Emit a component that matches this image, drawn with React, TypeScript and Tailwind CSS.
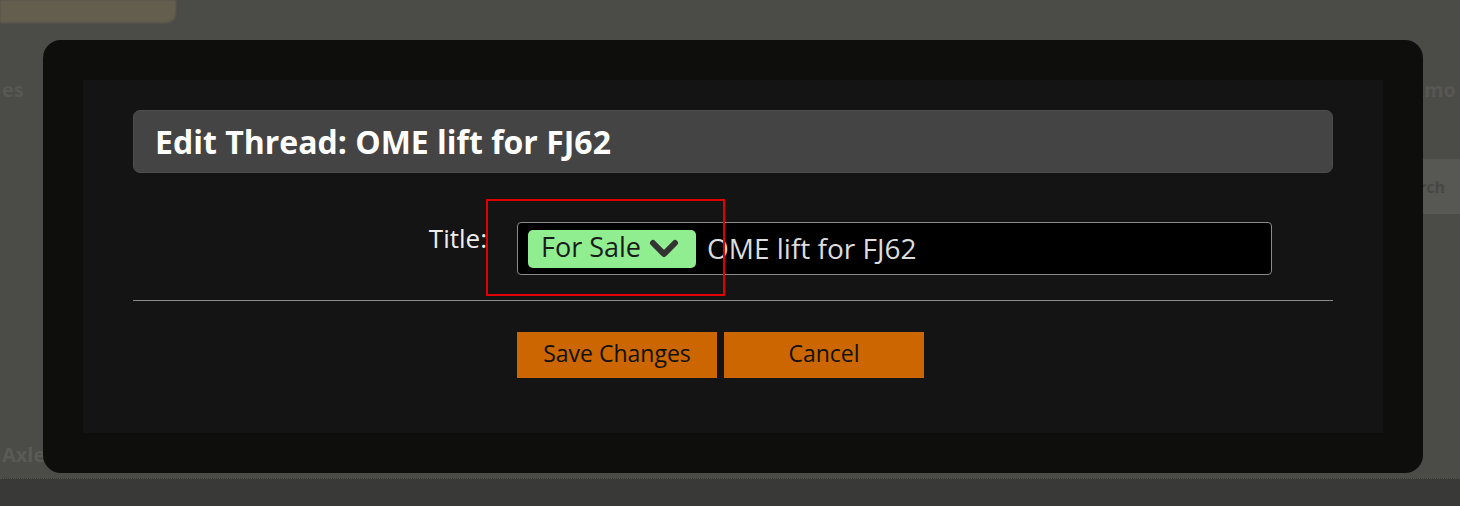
import React from 'react';

const Chevron = () => (
  <svg viewBox="0 0 30 20" width="30" height="20" fill="none" stroke="#333333" strokeWidth="6" strokeLinecap="round" strokeLinejoin="round">
    <polyline points="4 4 15 15 26 4" />
  </svg>
);

export default function App() {
  return (
    <div className="relative h-[506px] w-[1460px] overflow-hidden bg-[#4b4b47] font-['Open_Sans',sans-serif]">
      {/* dimmed forum page behind the dialog */}
      <div className="flex h-full flex-col">
        <div className="h-[23px] w-[176px] rounded-br-[10px] bg-[#645e4e] blur-[1px]" />
        <div className="mt-[52px] flex items-center justify-between text-[20px] font-bold text-[#575753]">
          <span className="pl-[2px]">es</span>
          <span className="pr-[4px]">Kmo</span>
        </div>
        <div className="mt-[54px] flex justify-end">
          <div className="flex h-[55px] w-[95px] items-center bg-[#575753] pl-[26px] text-[16px] font-bold text-[#474743]">
            Search
          </div>
        </div>
        <div className="flex-1" />
        <div className="pb-[8px] pl-[2px] text-[20px] font-bold text-[#5a5a56]">Axle/Suspension</div>
        <div className="h-[28px] border-t border-dotted border-[#55554f] bg-[#393937]" />
      </div>

      {/* edit thread dialog */}
      <div className="absolute left-[43px] top-[40px] h-[433px] w-[1380px] rounded-[18px] bg-[#0e0e0c] p-[40px]">
        <div className="relative h-full bg-[#141414] px-[50px] pt-[30px]">
          <div className="flex h-[63px] items-center rounded-[7px] border border-[#4e4e4e] bg-[#444444] pl-[21px] text-[32px] font-bold text-white">
            Edit Thread: OME lift for FJ62
          </div>

          <div className="mt-[49px] flex items-start">
            <label className="-mt-[3px] w-[354px] text-right text-[26px] text-[#eeeeee]">Title:</label>
            <div className="ml-[30px] flex h-[53px] w-[755px] items-center rounded-[4px] border border-[#8a8a8a] bg-black pl-[10px]">
              <div className="flex h-[38px] w-[168px] items-center gap-[8px] rounded-[5px] bg-[#90ee90] pl-[13px] text-[27px] text-[#1a1a1a]">
                <span className="-mt-[2px]">For Sale</span>
                <Chevron />
              </div>
              <span className="-mt-[2px] ml-[11px] text-[28px] text-[#dddddd]">OME lift for FJ62</span>
            </div>
          </div>

          <div className="mt-[25px] border-t border-[#8a8a8a]" />

          <div className="mt-[31px] flex gap-[7px] pl-[384px]">
            <button className="h-[46px] w-[200px] bg-[#cc6600] pb-[4px] text-[23px] text-[#111111]">Save Changes</button>
            <button className="h-[46px] w-[200px] bg-[#cc6600] pb-[4px] text-[23px] text-[#111111]">Cancel</button>
          </div>

          {/* annotation box */}
          <div className="pointer-events-none absolute left-[403px] top-[119px] h-[97px] w-[239px] border-2 border-[#e00000]" />
        </div>
      </div>
    </div>
  );
}
